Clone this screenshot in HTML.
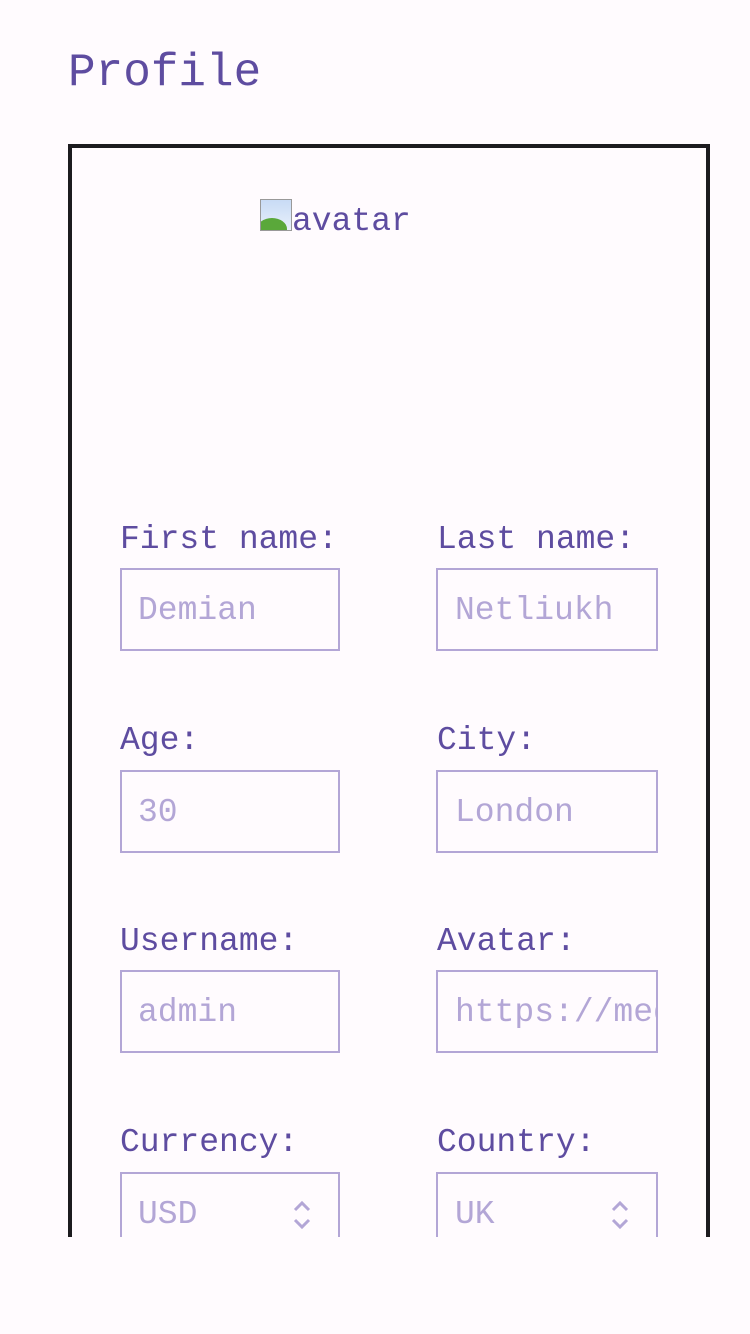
<!DOCTYPE html>
<html><head><style>
html,body{margin:0;padding:0;background:#fffbfe;}
body{width:750px;height:1334px;position:relative;overflow:hidden;font-family:"Liberation Mono","DejaVu Sans Mono",monospace;color:#5e4ca0;}
.t{position:absolute;left:68px;top:45px;font-size:46px;line-height:56px;}
.clip{position:absolute;left:0;top:0;width:750px;height:1237px;overflow:hidden;}
.box{position:absolute;left:68px;top:144px;width:634px;height:1200px;border:4px solid #1c1b1f;}
.av{position:absolute;left:260px;top:199px;font-size:33px;line-height:40px;}
.av i{display:inline-block;width:32px;height:32px;vertical-align:-1px;background:linear-gradient(#c8dbf5,#e8f0fb);border:1px solid #999;box-sizing:border-box;position:relative;overflow:hidden}
.av i:after{content:"";position:absolute;left:-4px;top:18px;width:30px;height:22px;border-radius:50%;background:#5aa83a}
.l{position:absolute;font-size:33px;line-height:40px;}
.in{position:absolute;width:220px;height:83px;border:2px solid #b3a6d6;box-sizing:border-box;color:#b3a6d6;font-size:33px;line-height:81px;padding-left:16px;overflow:hidden;white-space:nowrap;}
.ar{position:absolute;right:26px;top:25px;}
</style></head><body>
<div class="t">Profile</div>
<div class="clip">
<div class="box"></div>
<div class="av"><i></i>avatar</div>

<div class="l" style="left:120px;top:520px">First name:</div>
<div class="l" style="left:437px;top:520px">Last name:</div>
<div class="in" style="left:120px;top:568px">Demian</div>
<div class="in" style="left:436px;top:568px;width:222px;padding-left:17px">Netliukh</div>

<div class="l" style="left:120px;top:721px">Age:</div>
<div class="l" style="left:437px;top:721px">City:</div>
<div class="in" style="left:120px;top:770px">30</div>
<div class="in" style="left:436px;top:770px;width:222px;padding-left:17px">London</div>

<div class="l" style="left:120px;top:922px">Username:</div>
<div class="l" style="left:437px;top:922px">Avatar:</div>
<div class="in" style="left:120px;top:970px">admin</div>
<div class="in" style="left:436px;top:970px;width:222px;padding-left:17px">https://media</div>

<div class="l" style="left:120px;top:1123px">Currency:</div>
<div class="l" style="left:437px;top:1123px">Country:</div>
<div class="in" style="left:120px;top:1172px">USD<svg class="ar" width="20" height="32" viewBox="0 0 20 32"><path d="M3 11 L10 4 L17 11 M3 21 L10 28 L17 21" fill="none" stroke="#b3a6d6" stroke-width="3"/></svg></div>
<div class="in" style="left:436px;top:1172px;width:222px;padding-left:17px">UK<svg class="ar" width="20" height="32" viewBox="0 0 20 32"><path d="M3 11 L10 4 L17 11 M3 21 L10 28 L17 21" fill="none" stroke="#b3a6d6" stroke-width="3"/></svg></div>
</div>
</body></html>
